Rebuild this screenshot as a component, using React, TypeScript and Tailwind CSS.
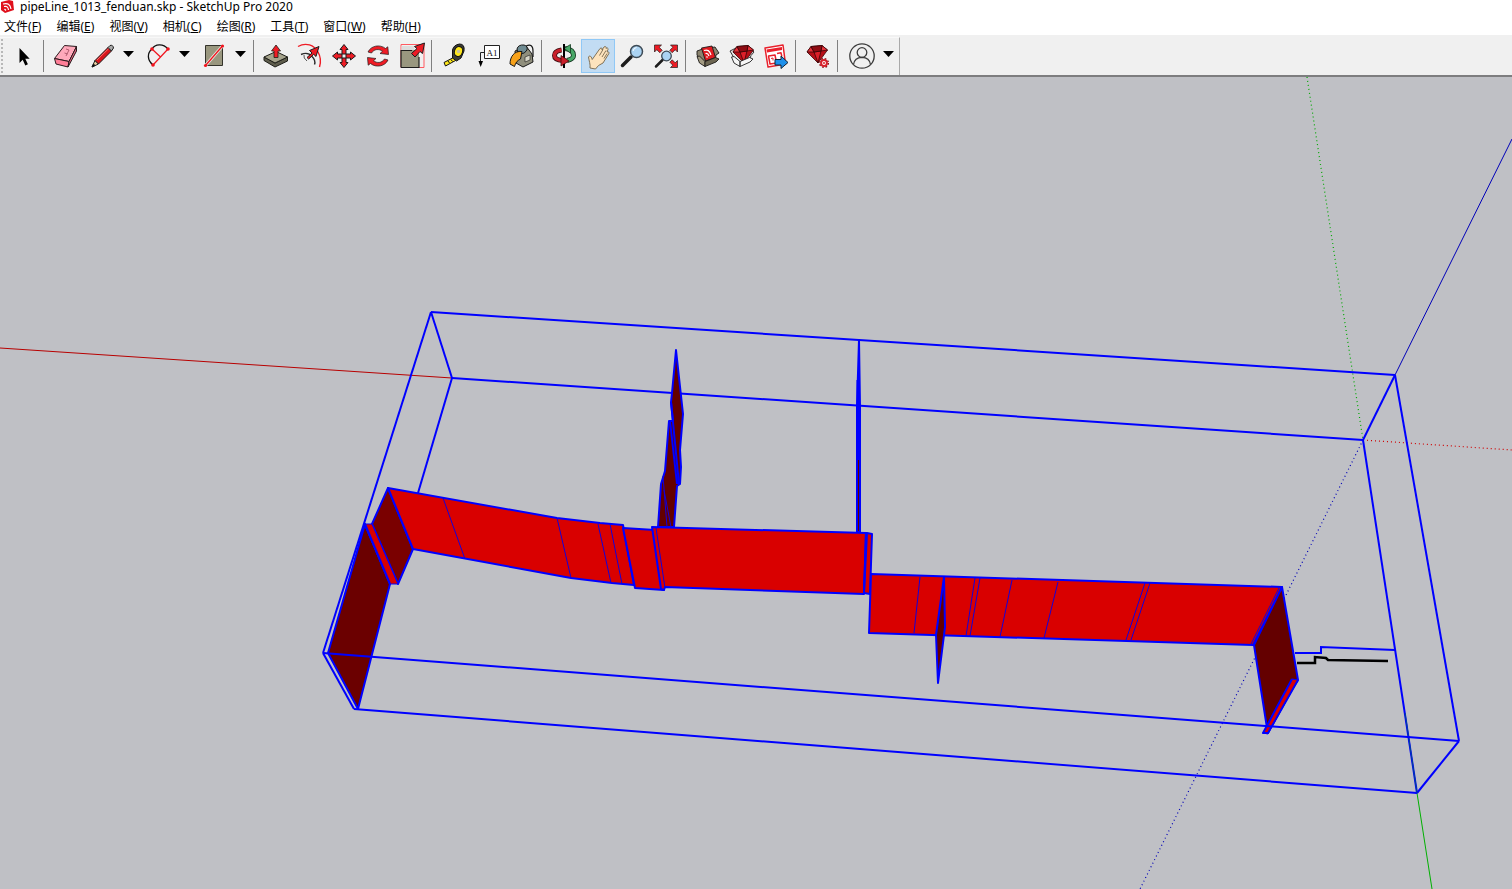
import React from 'react';
import { clsx } from 'clsx';

// ─── Types ──────────────────────────────────────────────────────────────────

interface Tool {
  id: string;
  label: string;
  icon: React.ReactNode;
  dropdown?: boolean;
}

interface Face {
  points: string;
  fill: string;
  edge?: number;
}

type Line = [number, number, number, number];

// ─── Menu ───────────────────────────────────────────────────────────────────

const MENUS = [
  { name: '文件', shortcut: 'F' },
  { name: '编辑', shortcut: 'E' },
  { name: '视图', shortcut: 'V' },
  { name: '相机', shortcut: 'C' },
  { name: '绘图', shortcut: 'R' },
  { name: '工具', shortcut: 'T' },
  { name: '窗口', shortcut: 'W' },
  { name: '帮助', shortcut: 'H' },
];

// ─── Icons (34 x 34 grid) ───────────────────────────────────────────────────

const selectIcon = <path d="M12.500 9v15l3.200-3.200 2.600 5.600 2.600-1.200-2.600-5.400h4.400z" fill="#000" />;

const eraserIcon = (
  <g stroke="#2b1a1d" strokeLinejoin="round">
    <path d="M15.500 6.500 27.500 7.500 20 22.500 5.500 19.500z" fill="#ffa9bb" />
    <path d="M5.500 19.500 20 22.500 19 28 7 25z" fill="#ff7f98" />
    <path d="M27.500 7.500V12L19 28l1-5.500z" fill="#d9627c" />
    <path d="M17 10l3 1-3 6M15.500 14l3 1" fill="none" stroke="#a04a5e" strokeWidth=".8" />
  </g>
);

const pencilIcon = (
  <g stroke="#1c1c1c" strokeLinejoin="round">
    <path d="M6 28 9 21.500 12.500 25z" fill="#e9cf9f" />
    <path d="M9 21.500 22 8.500 25.500 12 12.500 25z" fill="#d8151b" />
    <path d="M22 8.500 24 6.500q3-1 3.500 2.500l-2 3z" fill="#a9a9a9" />
    <path d="M6 28 7.500 25 9 26.500z" fill="#000" />
    <path d="M11 21 22.500 9.800" stroke="#ff6a6a" />
  </g>
);

const arcIcon = (
  <g fill="none">
    <path d="M26 10C21 4 13 5 10 10 5 14 5 21 11 26" stroke="#111" strokeWidth="1.300" />
    <path d="M11 26 26 10M10 10l8.500 8" stroke="#f0141e" strokeWidth="1.200" />
    <g fill="#f0141e">
      <circle cx="26" cy="10" r="1.800" />
      <circle cx="10" cy="10" r="1.800" />
      <circle cx="11" cy="26" r="1.800" />
    </g>
  </g>
);

const rectangleIcon = (
  <g>
    <path d="M7.500 6.500h17v20h-17z" fill="#99977f" stroke="#33332b" />
    <path d="M7.500 26.500 24.500 7" stroke="#e8e8e0" strokeWidth="3" />
    <path d="M7.500 26.500 24.500 7" stroke="#f0141e" strokeWidth="1.300" />
    <circle cx="7.500" cy="26.500" r="1.600" fill="#f0141e" />
    <circle cx="24.500" cy="7" r="1.600" fill="#f0141e" />
  </g>
);

const pushPullIcon = (
  <g stroke="#1e1e18" strokeLinejoin="round">
    <path d="M5 18v3.500L16 28l12.500-6v-4L16 24z" fill="#5e5d4d" />
    <path d="M5 18 17 12.500 28.500 18 16 24z" fill="#a5a38c" />
    <path d="M17 6 21.500 12h-2.500v6.500h-4V12h-2.500z" fill="#ee1c25" strokeWidth=".8" />
  </g>
);

const offsetIcon = (
  <g fill="none">
    <path d="M5 7.500C13 3 21 6 25 13q4 7 1.500 15" stroke="#ee1c25" strokeWidth="1.400" />
    <path d="M8 15.500q7-3 11 2 4 4 2.500 8" stroke="#2b2b2b" strokeWidth="1.400" />
    <path d="M11 16q-1 3 3 6" stroke="#555" />
    <path d="m14 18.500 5-4.500-2.500-2.500 9.500-4-3 10-2.300-2.200-5 4.700z" fill="#ee1c25" stroke="#1c1c1c" strokeLinejoin="round" />
  </g>
);

const moveIcon = (
  <g fill="#ee1c25" stroke="#1c1c1c" strokeLinejoin="round">
    <path d="M17 5.500 21 10.500h-2v4.500h-4v-4.500h-2z" />
    <path d="M17 28.500 21 23.500h-2V19h-4v4.500h-2z" />
    <path d="M5.500 17 10.500 13v2H15v4h-4.500v2z" />
    <path d="M28.500 17 23.500 13v2H19v4h4.500v2z" />
  </g>
);

const rotateIcon = (
  <g fill="#ee1c25" stroke="#1c1c1c" strokeWidth=".7" strokeLinejoin="round">
    <path d="M7 13C10 6.500 19 5 24.500 9.500l2.300-1.700.7 7.700-8.500-1 2.500-2.200C18 9.500 13 10 10.500 14z" />
    <path d="M27 21C24 27.500 15 29 9.500 24.500l-2.300 1.700-.7-7.700 8.500 1-2.500 2.200c3.500 2.800 8.500 2.300 11-1.700z" />
  </g>
);

const scaleIcon = (
  <g>
    <path d="M6 5.500h23v23H6z" fill="none" stroke="#ff5a61" />
    <path d="M6 11h18v17.500H6z" fill="#99977f" />
    <path d="M6.500 7h13v4h-13z" fill="#dcdcdc" />
    <path d="M6 28.500V11.500h11M24 18v10.500H6" fill="none" stroke="#1c1c1c" strokeWidth="1.200" />
    <path d="m18 17.500 5-5 3 3V4.500z" fill="#fff" />
    <path d="m16.500 14.500 5.500-5-2.500-2L29.500 4l-2 10.500-2.500-2-5 5.500z" fill="#ee1c25" stroke="#1c1c1c" strokeLinejoin="round" />
  </g>
);

const tapeIcon = (
  <g stroke="#111" strokeLinejoin="round">
    <path d="M7 23.500 8.500 27 18.500 21.500 16.500 18.500z" fill="#ffe81a" />
    <path d="M15.500 19V11q1-5 7-6 5.500 0 4.500 7l-3 7-4.500 3z" fill="#3a3a35" />
    <ellipse cx="21.500" cy="12.500" rx="4" ry="5" fill="#ffe81a" transform="rotate(20 21.500 12.500)" />
    <circle cx="21.500" cy="12.500" r="1.800" fill="#c9c29a" stroke="none" />
    <path d="M11 22l1.500 2M14 20.500l1.500 2" />
  </g>
);

const textIcon = (
  <g>
    <path d="M13.500 6.500h15v13h-15z" fill="#fff" stroke="#222" />
    <path d="M13 13.500H9.500V23" fill="none" stroke="#222" />
    <path d="M7.500 22h4.500L9.700 28z" fill="#000" />
    <text x="21" y="16.500" textAnchor="middle" fontSize="9" fontFamily="'Liberation Serif', serif" fill="#111">
      A1
    </text>
  </g>
);

const paintIcon = (
  <g stroke="#171717" strokeLinejoin="round">
    <path d="M10 12 21 7l6 8 1 8-10 5-7-4z" fill="#8f8e7c" />
    <path d="M12 10Q13 5.500 19 6q4 1 3 5-2 4-7 4-3-1-3-5z" fill="#6f8b92" />
    <path d="M21 7q7-3 7 5v6" fill="none" strokeWidth="1.200" />
    <path d="M17 12.500C9 11.500 5 18 5 25l4.500 2.500c1-4 3-6 6-7.500z" fill="#f7a21b" />
    <path d="M20 18l5-2v5l-5 2z" fill="#d9d7c9" strokeWidth=".6" />
  </g>
);

const orbitIcon = (
  <g strokeLinejoin="round">
    <path d="M18 9.500q8.500 1 8.500 7 0 3.500-6.500 5" fill="none" stroke="#12351d" strokeWidth="5" />
    <path d="M18 9.500q8.500 1 8.500 7 0 3.500-6.500 5" fill="none" stroke="#49a868" strokeWidth="3.400" />
    <path d="M17 9.500 23.500 5.500v8.500z" fill="#49a868" stroke="#12351d" strokeWidth=".8" />
    <path d="M17 5v24" stroke="#000" strokeWidth="2" />
    <path d="M14.500 11Q7.500 12 7.500 16.500q0 4.500 8.500 5" fill="none" stroke="#3c0b0e" strokeWidth="5" />
    <path d="M14.500 11Q7.500 12 7.500 16.500q0 4.500 8.500 5" fill="none" stroke="#c8202b" strokeWidth="3.400" />
    <path d="M14 16.500v10.500l8-5z" fill="#c8202b" stroke="#3c0b0e" strokeWidth=".8" />
    <path d="M17 14v3M17 25v4" stroke="#000" strokeWidth="2" />
  </g>
);

const panIcon = (
  <path
    d="M9 29c.5-4-1-7-1.500-11 1.200-2.200 3-.5 3.700 2.500L19 9.500c1.500-1.300 2.700 0 2 1.500l2-3c1.500-1.200 2.700.2 2 1.500.8-1 2.600-.5 2 1l-1 2.500c1.500-.8 2.500.5 1.800 1.700L22 24l-4.500 2.500-3 3.500zM18.500 16.500l3.500-6M21 18l4-6.500M23 19.500l3-5"
    fill="#fde3bd"
    stroke="#75664d"
    strokeWidth=".9"
    strokeLinejoin="round"
  />
);

const zoomIcon = (
  <g>
    <path d="M7.500 26.500 16 18" stroke="#1d1d1d" strokeWidth="3.500" strokeLinecap="round" />
    <circle cx="21.500" cy="12.500" r="6" fill="#abd3f2" stroke="#3d4a55" strokeWidth="1.500" />
    <path d="M18 12q.5-3 3.500-3.500" fill="none" stroke="#fff" />
  </g>
);

const zoomExtentsIcon = (
  <g>
    <g fill="#ee1c25" stroke="#1c1c1c" strokeWidth=".7">
      <path d="M5.500 6h7l-2.300 2.300 3 3-2.400 2.400-3-3L5.500 13z" />
      <path d="M28.500 6v7l-2.300-2.300-3 3-2.400-2.400 3-3L21.500 6z" />
      <path d="M28.500 28.500h-7l2.300-2.300-3-3 2.400-2.400 3 3 2.300-2.300z" />
    </g>
    <path d="M7 27.500 13.500 21" stroke="#1d1d1d" strokeWidth="2.500" strokeLinecap="round" />
    <circle cx="17.500" cy="17" r="4.800" fill="#abd3f2" stroke="#3d4a55" strokeWidth="1.300" />
  </g>
);

const warehouseIcon = (
  <g stroke="#1c1a17" strokeWidth=".9" strokeLinejoin="round">
    <path d="M6 12 11.500 10 24 8l4 6-3 2-1 6-10 4-5-3-1-4-2-3z" fill="#8b8470" />
    <path d="M10.500 9 21 7 24.500 18.500 14.500 22z" fill="#e01b22" />
    <path d="M13 11.500q5-2 7 4.500M14.500 14.500q2.500-.5 3.500 2.500M15.500 17.500l1 1" fill="none" stroke="#fff" strokeWidth="1.200" />
    <path d="M6 17.500 8.500 17l5.500 5.500v5L8.500 24z" fill="#a39b83" />
    <path d="M14 22.500 24.500 18.500 28 20l-3 3-11 4.500z" fill="#6d6652" />
  </g>
);

const gemPath = (
  <g stroke="#3a0508" strokeWidth=".8" strokeLinejoin="round">
    <path d="M11 8.500 22 7.500 27.500 12 18 25 7 14z" fill="#b70f18" />
    <path d="M11 8.500 14 14 7 14zM22 7.500 21 13l6.500-1z" fill="#e6333b" />
    <path d="M14 14 21 13 18 25z" fill="#dc1f29" />
    <path d="M11 8.500 22 7.500 21 13l-7 1z" fill="#8f0b12" />
  </g>
);

const extensionIcon = (
  <g>
    <path
      d="M5 12 11 9l13-1 5 5-3 3.500-2 6-9 3.500-5.500-3-1-5z"
      fill="#e8e8e8"
      stroke="#222"
      strokeWidth=".9"
      strokeLinejoin="round"
    />
    <g transform="translate(1 -1)">{gemPath}</g>
    <path d="M6.500 18 9 17.500l6 5v5L9 24zM15 22.500 24.500 18.500 28 20l-3 3-10 4.500z" fill="#f6f6f6" stroke="#222" strokeWidth=".9" />
  </g>
);

const layoutIcon = (
  <g strokeLinejoin="round">
    <path d="M6 9 24 6l2.500 19L9 28z" fill="#fff" stroke="#e8202b" strokeWidth="1.500" />
    <path d="M7.500 10.500 23 8v3L8 13.500z" fill="#e8202b" />
    <path d="M9.500 17 16 16l1.500 8-6.500 1zM18 14.500l4-.7.8 3.500" fill="none" stroke="#e8202b" strokeWidth="1.500" />
    <path d="M12 19.500l2-.5v2.500" fill="none" stroke="#e8202b" />
    <path d="M16 20.500h6V17l7 6.500-7 6v-3.500h-6z" fill="#1e90ea" stroke="#10253a" />
  </g>
);

const extensionManagerIcon = (
  <g>
    <g transform="translate(-1 -1)">{gemPath}</g>
    <circle cx="23" cy="24" r="4.300" fill="none" stroke="#8c1118" strokeWidth="1.500" strokeDasharray="1.700 1.700" />
    <circle cx="23" cy="24" r="2.900" fill="#fff" stroke="#d8202a" strokeWidth="2" />
    <circle cx="23" cy="24" r="1" fill="#d8202a" />
  </g>
);

const accountIcon = (
  <g fill="none" stroke="#3d3d3d" strokeWidth="1.300">
    <circle cx="16" cy="17" r="12.200" />
    <circle cx="16" cy="13.500" r="4.800" />
    <path d="M7.500 25.500q1-7 8.500-7.200 7.500.2 8.500 7.200" />
  </g>
);

// ─── Toolbar ────────────────────────────────────────────────────────────────

const TOOL_GROUPS: Tool[][] = [
  [{ id: 'select', label: '选择', icon: selectIcon }],
  [
    { id: 'eraser', label: '擦除', icon: eraserIcon },
    { id: 'line', label: '直线', icon: pencilIcon, dropdown: true },
    { id: 'arc', label: '圆弧', icon: arcIcon, dropdown: true },
    { id: 'rectangle', label: '矩形', icon: rectangleIcon, dropdown: true },
  ],
  [
    { id: 'push', label: '推拉', icon: pushPullIcon },
    { id: 'offset', label: '偏移', icon: offsetIcon },
    { id: 'move', label: '移动', icon: moveIcon },
    { id: 'rotate', label: '旋转', icon: rotateIcon },
    { id: 'scale', label: '缩放', icon: scaleIcon },
  ],
  [
    { id: 'tape', label: '卷尺', icon: tapeIcon },
    { id: 'text', label: '文字', icon: textIcon },
    { id: 'paint', label: '材质', icon: paintIcon },
  ],
  [
    { id: 'orbit', label: '环绕观察', icon: orbitIcon },
    { id: 'pan', label: '平移', icon: panIcon },
    { id: 'zoom', label: '视图缩放', icon: zoomIcon },
    { id: 'extents', label: '缩放范围', icon: zoomExtentsIcon },
  ],
  [
    { id: 'warehouse', label: '3D Warehouse', icon: warehouseIcon },
    { id: 'extensions', label: 'Extension Warehouse', icon: extensionIcon },
    { id: 'layout', label: 'LayOut', icon: layoutIcon },
  ],
  [{ id: 'manager', label: '扩展程序管理器', icon: extensionManagerIcon }],
  [{ id: 'account', label: '账户', icon: accountIcon, dropdown: true }],
];

function ToolButton({ tool, active, onSelect }: { tool: Tool; active: boolean; onSelect: () => void }) {
  return (
    <div className={clsx('flex shrink-0', tool.dropdown && 'pr-1')}>
      <button
        type="button"
        onClick={onSelect}
        aria-label={tool.label}
        aria-pressed={active}
        className={clsx(
          'flex h-[34px] items-center justify-center',
          tool.dropdown ? 'w-10' : 'w-[34px]',
          active && 'bg-[#c2dcf3] outline outline-1 -outline-offset-1 outline-[#90c8f6]',
        )}
      >
        <svg viewBox="0 0 34 34" className="size-[34px] shrink-0" aria-hidden="true">
          {tool.icon}
        </svg>
      </button>
      {tool.dropdown && (
        <button type="button" aria-label={`${tool.label} 更多`} className="flex w-3 items-center pb-1">
          <svg viewBox="0 0 12 6" className="h-1.5 w-3" aria-hidden="true">
            <path d="M0 0h11L5.500 6z" fill="#000" />
          </svg>
        </button>
      )}
    </div>
  );
}

function Toolbar() {
  const [activeTool, setActiveTool] = React.useState('pan');

  return (
    <div className="flex border-b-2 border-[#7d7d7f] bg-[#f0f0f0]">
      <div role="toolbar" aria-label="使用入门" className="mt-0.5 flex border-r border-t border-r-[#a9a9a9] border-t-[#f8f8f8] pb-0.5 pt-px">
        <div className="ml-px mr-1 w-0.5 border-l-2 border-dotted border-[#b8b8b8]" />
        {TOOL_GROUPS.map((group, index) => (
          <React.Fragment key={group[0].id}>
            {index > 0 && (
              <div className="w-2 shrink-0 py-px pl-0.5">
                <div className="h-full w-px bg-[#808080]" />
              </div>
            )}
            {group.map((tool) => (
              <ToolButton
                key={tool.id}
                tool={tool}
                active={tool.id === activeTool}
                onSelect={() => setActiveTool(tool.id)}
              />
            ))}
          </React.Fragment>
        ))}
      </div>
    </div>
  );
}

// ─── Model ──────────────────────────────────────────────────────────────────

const BOUNDS: Line[] = [
  [431, 312, 1395, 375],
  [452, 378, 1363, 440],
  [431, 312, 452, 378],
  [1395, 375, 1363, 440],
  [431, 312, 323, 653],
  [452, 378, 418, 493],
  [1395, 375, 1459, 741],
  [1363, 440, 1417, 793],
  [1459, 741, 1417, 793],
  [323, 653, 354, 709],
  [354, 709, 1417, 793],
];

const FACES: Face[] = [
  { points: '365,524 390,584 358,709 328,653', fill: '#6b0000' },
  { points: '372,524 388,488 413,549 398,584', fill: '#7a0000' },
  { points: '364,524 372,524 398,584 390,584', fill: '#d90000', edge: 1 },
  { points: '388,488 557,518 600,523 623,525 634,585 612,583 571,578 413,549', fill: '#d90000' },
  {
    points: '676,350 672,393 671,402 673,421 669,421 665,471 661,484 658,527 674,527 677,486 680,484 681,467 680,450 683,414',
    fill: '#640000',
  },
  { points: '859,340 857,406 857,532 860,532 860,406', fill: '#640000' },
  { points: '623,528 655,530 664,590 635,588', fill: '#d90000' },
  { points: '652,527 866,533 864,594 665,587 664,590 661,589', fill: '#d90000' },
  { points: '867,533 872,534 870,594 864,593', fill: '#d90000' },
  { points: '871,574 1282,587 1253,645 869,633', fill: '#d90000' },
  { points: '944,577 945,627 938,683 936,635', fill: '#640000' },
  { points: '1282,587 1298,680 1267,728 1254,645', fill: '#640000' },
  { points: '1292,679 1298,680 1268,734 1263,733', fill: '#d90000', edge: 1 },
];

const SEAMS: Line[] = [
  [443, 498, 465, 559],
  [557, 518, 571, 578],
  [598, 524, 611, 583],
  [610, 524, 622, 584],
  [656, 528, 665, 588],
  [920, 577, 914, 633],
  [975, 578, 966, 636],
  [980, 578, 970, 636],
  [1012, 580, 1000, 637],
  [1058, 582, 1044, 638],
  [1145, 583, 1126, 640],
  [1150, 583, 1131, 640],
  [1279, 588, 1251, 644],
  [663, 476, 667, 527],
  [664, 490, 671, 527],
];

function Segments({ lines }: { lines: Line[] }) {
  return lines.map(([x1, y1, x2, y2]) => <path key={`${x1}-${y1}-${x2}-${y2}`} d={`M${x1} ${y1}L${x2} ${y2}`} />);
}

function Viewport() {
  return (
    <svg viewBox="0 77 1512 812" className="block w-full" role="img" aria-label="pipeLine_1013_fenduan" fill="none">
      {/* Axes */}
      <path d="M0 348 452 378" stroke="#b80000" />
      <path d="M1417 793 1432 889" stroke="#00b000" />
      <path d="M1395 375 1512 139" stroke="#0000b8" />
      <path d="M1307 77 1363 440" stroke="#00a800" strokeWidth="1.200" strokeDasharray="1 3" />
      <path d="M1363 440 1512 450" stroke="#d00000" strokeWidth="1.200" strokeDasharray="1 3" />
      <path d="M1363 440 1140 889" stroke="#0000b8" strokeWidth="1.200" strokeDasharray="1 3" />

      {/* Selection bounds */}
      <g stroke="#0000ff" strokeWidth="2">
        <Segments lines={BOUNDS} />
        <path d="M1295 653 1321 653V647L1395 650" />
      </g>
      <path d="M1405 713 1417 793" stroke="#004890" />
      <path d="M1297 663 1315 663V657L1326 658 1328 660 1388 661" stroke="#000" strokeWidth="2.500" />

      {/* Pipe faces */}
      <g stroke="#0000ff" strokeLinejoin="round">
        {FACES.map((face) => (
          <polygon key={face.points} points={face.points} fill={face.fill} strokeWidth={face.edge ?? 2} />
        ))}
      </g>
      <g stroke="#0000ff" strokeWidth="2" strokeLinejoin="round">
        <path d="M365 524 390 584M1292 679 1263 733H1268L1298 680" />
        <path d="M671 402 679 484M670 421 677 484M866 532 864 593" />
        <path d="M858 380V460" strokeWidth="3" />
      </g>
      <g stroke="#1400d8">
        <Segments lines={SEAMS} />
      </g>
      <path d="M323 653 1459 741" stroke="#0000ff" strokeWidth="2" />
    </svg>
  );
}

// ─── App ────────────────────────────────────────────────────────────────────

export default function App() {
  return (
    <div className="flex min-h-screen flex-col overflow-hidden bg-[#bfc0c5] font-['Noto_Sans','Noto_Sans_CJK_SC',sans-serif] text-xs text-black">
      {/* Title bar */}
      <header className="flex h-[17px] items-start gap-1.5 bg-white">
        <svg viewBox="0 0 14 13" className="h-[13px] w-3.5" aria-hidden="true">
          <path d="M1 2 9 0l4 1 1 9-9 3-4-3z" fill="#e0101c" />
          <path d="M3 4q7-2 8 5M4 6.500q4-1 4.500 3.500M4.500 9l1.500 1.500" stroke="#fff" strokeWidth="1.200" fill="none" />
        </svg>
        <h1 className="leading-[14px]">pipeLine_1013_fenduan.skp - SketchUp Pro 2020</h1>
      </header>

      {/* Menu bar */}
      <nav className="flex h-[18px] gap-[15px] bg-white pl-1" aria-label="菜单">
        {MENUS.map((menu) => (
          <button key={menu.shortcut} type="button" className="leading-5">
            {menu.name}(<u>{menu.shortcut}</u>)
          </button>
        ))}
      </nav>

      <Toolbar />
      <Viewport />
    </div>
  );
}
